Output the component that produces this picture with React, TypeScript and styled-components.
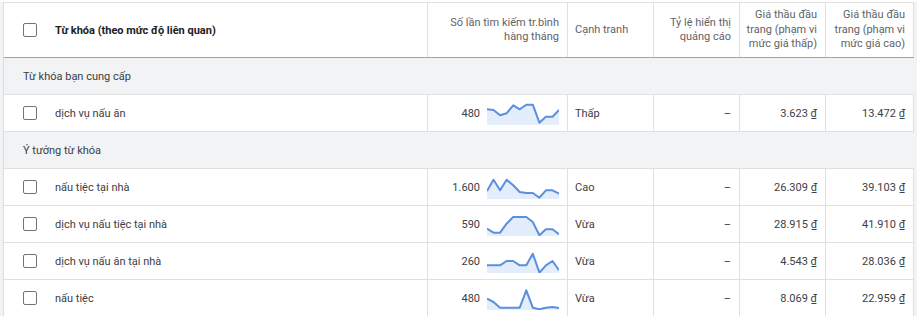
import styled, { createGlobalStyle } from 'styled-components';

const GlobalStyle = createGlobalStyle`
  html, body {
    margin: 0;
    background: #ffffff;
  }
  body {
    font-family: Roboto, 'Noto Sans', Arial, sans-serif;
    -webkit-font-smoothing: antialiased;
  }
`;

interface IKeyword {
  keyword: string;
  searches: string;
  trend: number[];
  competition: string;
  impression: string;
  lowBid: string;
  highBid: string;
}

interface IGroup {
  title: string;
  rows: IKeyword[];
}

const GROUPS: IGroup[] = [
  {
    title: 'Từ khóa bạn cung cấp',
    rows: [
      {
        keyword: 'dịch vụ nấu ăn',
        searches: '480',
        trend: [5.3, 6, 11.3, 9.3, 1.3, 5.3, 0.7, 0.7, 18.7, 12.7, 12.7, 6],
        competition: 'Thấp',
        impression: '–',
        lowBid: '3.623 ₫',
        highBid: '13.472 ₫',
      },
    ],
  },
  {
    title: 'Ý tưởng từ khóa',
    rows: [
      {
        keyword: 'nấu tiệc tại nhà',
        searches: '1.600',
        trend: [13, 1.7, 12.3, 1.7, 7.3, 14, 15, 15, 19.7, 12.3, 12.3, 15.7],
        competition: 'Cao',
        impression: '–',
        lowBid: '26.309 ₫',
        highBid: '39.103 ₫',
      },
      {
        keyword: 'dịch vụ nấu tiệc tại nhà',
        searches: '590',
        trend: [13.7, 17.7, 17.7, 8.7, 2, 2, 2, 7, 20.3, 14.3, 14.3, 19.3],
        competition: 'Vừa',
        impression: '–',
        lowBid: '28.915 ₫',
        highBid: '41.910 ₫',
      },
      {
        keyword: 'dịch vụ nấu ăn tại nhà',
        searches: '260',
        trend: [13.3, 13.3, 13.3, 9, 9, 13.3, 13.3, 1.7, 20.7, 13.3, 9, 18.3],
        competition: 'Vừa',
        impression: '–',
        lowBid: '4.543 ₫',
        highBid: '28.036 ₫',
      },
      {
        keyword: 'nấu tiệc',
        searches: '480',
        trend: [9.7, 13, 18.7, 18.7, 18.7, 18.7, 1.3, 18.7, 20.3, 18.7, 18, 19],
        competition: 'Vừa',
        impression: '–',
        lowBid: '8.069 ₫',
        highBid: '22.959 ₫',
      },
    ],
  },
];

const SPARK_W = 72;
const SPARK_H = 22;

function Sparkline({ values }: { values: number[] }) {
  const step = SPARK_W / (values.length - 1);
  const pts = values.map((v, i) => `${(i * step).toFixed(1)},${v + 1}`);
  const line = `M${pts.join(' L')}`;
  const area = `${line} L${SPARK_W},${SPARK_H} L0,${SPARK_H} Z`;
  return (
    <Spark width={SPARK_W} height={SPARK_H} viewBox={`0 0 ${SPARK_W} ${SPARK_H}`}>
      <path d={area} fill="#e4edfb" />
      <path d={line} fill="none" stroke="#5b8fe0" strokeWidth="2" strokeLinejoin="round" />
    </Spark>
  );
}

export default function App() {
  return (
    <>
      <GlobalStyle />
      <Page>
        <Table>
          <HeaderRow>
            <KeywordCell>
              <Checkbox />
              <HeaderTitle>Từ khóa (theo mức độ liên quan)</HeaderTitle>
            </KeywordCell>
            <HeaderCell $align="right">
              Số lần tìm kiếm tr.bình
              <br />
              hàng tháng
            </HeaderCell>
            <HeaderCell $align="left">Cạnh tranh</HeaderCell>
            <HeaderCell $align="right">
              Tỷ lệ hiển thị
              <br />
              quảng cáo
            </HeaderCell>
            <HeaderCell $align="right">
              Giá thầu đầu
              <br />
              trang (phạm vi
              <br />
              mức giá thấp)
            </HeaderCell>
            <HeaderCell $align="right">
              Giá thầu đầu
              <br />
              trang (phạm vi
              <br />
              mức giá cao)
            </HeaderCell>
          </HeaderRow>
          {GROUPS.map((group) => (
            <div key={group.title}>
              <GroupRow>{group.title}</GroupRow>
              {group.rows.map((row) => (
                <DataRow key={row.keyword}>
                  <KeywordCell>
                    <Checkbox />
                    <span>{row.keyword}</span>
                  </KeywordCell>
                  <SearchCell>
                    <span>{row.searches}</span>
                    <Sparkline values={row.trend} />
                  </SearchCell>
                  <Cell $align="left">{row.competition}</Cell>
                  <Cell $align="right">{row.impression}</Cell>
                  <Cell $align="right">{row.lowBid}</Cell>
                  <Cell $align="right">{row.highBid}</Cell>
                </DataRow>
              ))}
            </div>
          ))}
        </Table>
      </Page>
    </>
  );
}

const COLUMNS = '424px 140px 86px 86px 86px 88px';

const Page = styled.div`
  background: #f1f3f4;
  margin-top: 2px;
  padding-left: 3px;
  height: 314px;
  overflow: hidden;
`;

const Table = styled.div`
  background: #ffffff;
  border-left: 1px solid #dadce0;
  border-top: 1px solid #e0e0e0;
  width: 910px;
  color: #3c4043;
  font-size: 11px;
`;

const HeaderRow = styled.div`
  display: grid;
  grid-template-columns: ${COLUMNS};
  height: 55px;
  border-bottom: 1px solid #a0a4a8;
  box-sizing: border-box;
  height: 55px;
`;

const DataRow = styled.div`
  display: grid;
  grid-template-columns: ${COLUMNS};
  height: 37px;
  border-bottom: 1px solid #e0e0e0;
  box-sizing: border-box;
`;

const GroupRow = styled.div`
  height: 37px;
  box-sizing: border-box;
  border-bottom: 1px solid #e0e0e0;
  background: #f1f3f4;
  display: flex;
  align-items: center;
  padding-left: 19px;
  color: #3c4043;
`;

const Cell = styled.div<{ $align: 'left' | 'right' }>`
  border-right: 1px solid #e0e0e0;
  display: flex;
  align-items: center;
  justify-content: ${({ $align }) => ($align === 'right' ? 'flex-end' : 'flex-start')};
  padding: 0 8px 0 7px;
  white-space: nowrap;
`;

const HeaderCell = styled(Cell)`
  color: #5f6368;
  line-height: 14.5px;
  text-align: ${({ $align }) => $align};
`;

const KeywordCell = styled.div`
  border-right: 1px solid #e0e0e0;
  display: flex;
  align-items: center;
  padding-left: 19px;
  gap: 18px;
`;

const HeaderTitle = styled.span`
  font-weight: 700;
  color: #202124;
`;

const SearchCell = styled.div`
  border-right: 1px solid #e0e0e0;
  display: flex;
  align-items: center;
  justify-content: flex-end;
  padding-right: 8px;
  gap: 7px;
`;

const Spark = styled.svg`
  display: block;
  margin-top: 2px;
`;

const Checkbox = styled.span`
  display: inline-block;
  width: 12px;
  height: 12px;
  border: 1px solid #70757a;
  border-radius: 2px;
  flex-shrink: 0;
`;
